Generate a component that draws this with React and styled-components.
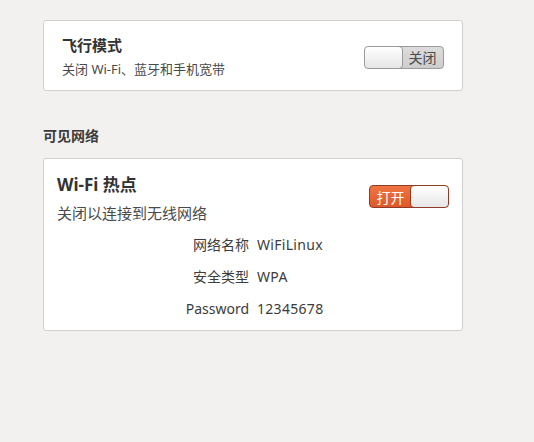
import React from "react";
import styled, { createGlobalStyle } from "styled-components";

const Global = createGlobalStyle`
  html, body { margin: 0; padding: 0; background: #f2f1f0; }
  body { font-family: "Noto Sans", "Noto Sans CJK SC", sans-serif; color: #3c3c3c; }
`;

const Page = styled.div`
  width: 420px;
  padding: 20px 0 0 43px;
  display: flex;
  flex-direction: column;
`;

const Card = styled.div`
  background: #fff;
  border: 1px solid #cfcfcf;
  border-radius: 3px;
  box-sizing: border-box;
  padding: ${(p) => p.$pad};
`;

const Row = styled.div`
  display: flex;
  justify-content: space-between;
  align-items: ${(p) => (p.$top ? "flex-start" : "center")};
`;

const TextBlock = styled.div`
  display: flex;
  flex-direction: column;
  gap: ${(p) => p.$gap}px;
`;

const Title = styled.div`
  font-weight: 700;
  font-size: ${(p) => p.$size}px;
  line-height: ${(p) => p.$lh}px;
  color: #333;
`;

const Sub = styled.div`
  font-size: ${(p) => p.$size}px;
  line-height: 20px;
  color: #4a4a4a;
`;

const Section = styled.div`
  margin: 35px 0 12px;
  font-weight: 700;
  font-size: 14px;
  line-height: 20px;
  color: #3c3c3c;
`;

const Switch = styled.div`
  width: 80px;
  height: 23px;
  box-sizing: border-box;
  border-radius: 4px;
  border: 1px solid ${(p) => (p.$on ? "#8f3b26" : "#9a9a9a")};
  background: ${(p) =>
    p.$on
      ? "linear-gradient(#ee7440, #e0582a)"
      : "linear-gradient(#dcdcdc, #cdcdcd)"};
  display: flex;
  flex-direction: ${(p) => (p.$on ? "row" : "row-reverse")};
  align-items: stretch;
  overflow: hidden;
  margin-top: ${(p) => p.$mt || 0}px;
`;

const SwitchLabel = styled.span`
  flex: 1;
  display: flex;
  align-items: center;
  justify-content: center;
  font-size: 14px;
  color: ${(p) => (p.$on ? "#fff" : "#4a4a4a")};
`;

const Knob = styled.span`
  width: 39px;
  box-sizing: border-box;
  border-radius: 4px;
  border: 1px solid ${(p) => (p.$on ? "#8f3b26" : "#9a9a9a")};
  margin: -1px;
  background: linear-gradient(#ffffff, #e6e6e6);
`;

const Fields = styled.div`
  display: grid;
  grid-template-columns: 192px 1fr;
  column-gap: 8px;
  row-gap: 12px;
  margin-top: 12px;
  font-size: 14px;
  line-height: 20px;
  color: #3c3c3c;
`;

const Label = styled.div`
  text-align: right;
`;

const Value = styled.div`
  letter-spacing: 0.3px;
`;

function Toggle({ on, mt }) {
  return (
    <Switch $on={on} $mt={mt}>
      <SwitchLabel $on={on}>{on ? "打开" : "关闭"}</SwitchLabel>
      <Knob $on={on} />
    </Switch>
  );
}

export default function App() {
  return (
    <>
      <Global />
      <Page>
        <Card $pad="14px 18px 11px 18px">
          <Row>
            <TextBlock $gap={4}>
              <Title $size={15} $lh={20}>飞行模式</Title>
              <Sub $size={13}>关闭 Wi-Fi、蓝牙和手机宽带</Sub>
            </TextBlock>
            <Toggle on={false} />
          </Row>
        </Card>
        <Section>可见网络</Section>
        <Card $pad="14px 13px 11px 13px">
          <Row $top>
            <TextBlock $gap={6}>
              <Title $size={17} $lh={24}>Wi-Fi 热点</Title>
              <Sub $size={15}>关闭以连接到无线网络</Sub>
            </TextBlock>
            <Toggle on mt={12} />
          </Row>
          <Fields>
            <Label>网络名称</Label>
            <Value>WiFiLinux</Value>
            <Label>安全类型</Label>
            <Value>WPA</Value>
            <Label>Password</Label>
            <Value>12345678</Value>
          </Fields>
        </Card>
      </Page>
    </>
  );
}
